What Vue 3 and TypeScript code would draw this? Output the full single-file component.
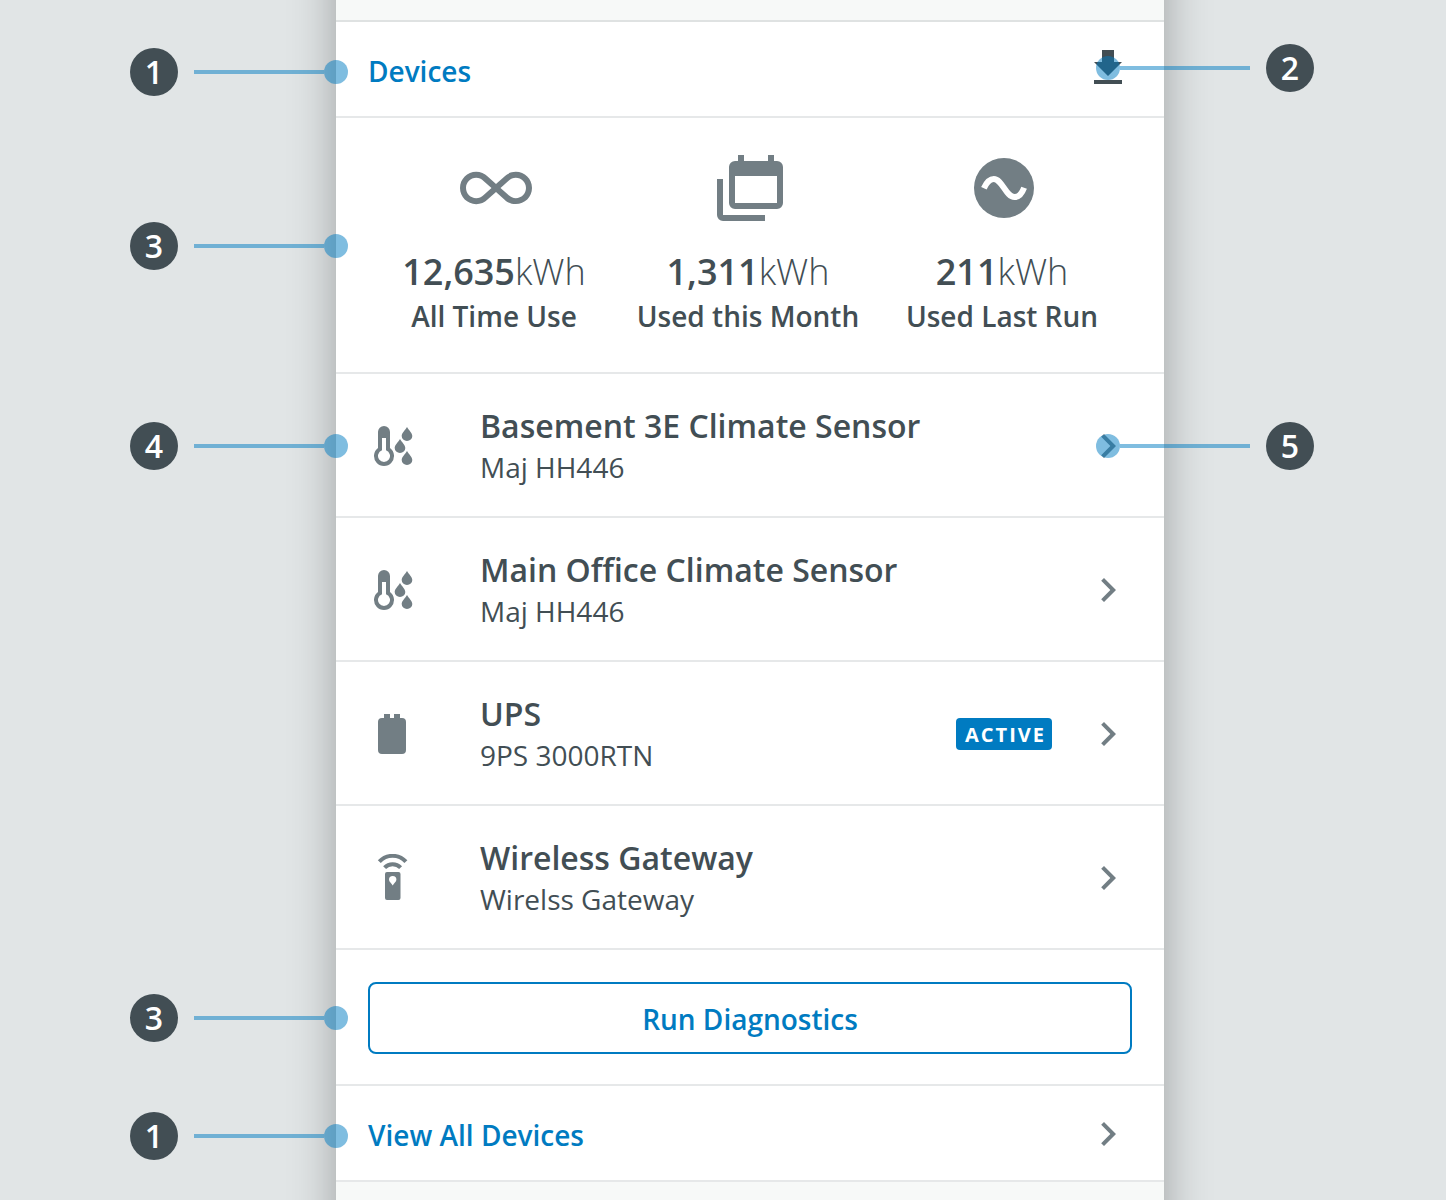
<script setup lang="ts">
interface Stat {
  value: string
  label: string
  icon: 'infinity' | 'calendar' | 'wave'
}

interface Device {
  name: string
  model: string
  icon: 'climate' | 'battery' | 'gateway'
  status?: string
  leftNote?: number
  rightNote?: number
}

const stats: Stat[] = [
  { value: '12,635', label: 'All Time Use', icon: 'infinity' },
  { value: '1,311', label: 'Used this Month', icon: 'calendar' },
  { value: '211', label: 'Used Last Run', icon: 'wave' },
]

const devices: Device[] = [
  { name: 'Basement 3E Climate Sensor', model: 'Maj HH446', icon: 'climate', leftNote: 4, rightNote: 5 },
  { name: 'Main Office Climate Sensor', model: 'Maj HH446', icon: 'climate' },
  { name: 'UPS', model: '9PS 3000RTN', icon: 'battery', status: 'ACTIVE' },
  { name: 'Wireless Gateway', model: 'Wirelss Gateway', icon: 'gateway' },
]
</script>

<template>
  <div class="page">
    <main class="card">
      <div class="strip strip-top"></div>

      <header class="section bar">
        <div class="bar-title">
          <h1 class="link-text">Devices</h1>
          <div class="note note-left note-inset">
            <span class="note-number">1</span><span class="note-line"></span><span class="note-dot"></span>
          </div>
        </div>
        <div class="bar-action">
          <button class="icon-button" type="button" aria-label="Download">
            <svg class="icon" viewBox="0 0 24 24"><path d="M19 9h-4V3H9v6H5l7 7 7-7zM5 18v2h14v-2H5z" /></svg>
          </button>
          <div class="note note-right note-inset">
            <span class="note-dot"></span><span class="note-line"></span><span class="note-number">2</span>
          </div>
        </div>
      </header>

      <section class="section stats">
        <div v-for="stat in stats" :key="stat.label" class="stat">
          <svg v-if="stat.icon === 'infinity'" class="stat-icon" viewBox="0 0 24 24">
            <path d="M18.6 6.62C21.58 6.62 24 9 24 12c0 2.96-2.42 5.37-5.4 5.37-1.45 0-2.8-.56-3.82-1.57L12 13.34l-2.83 2.51c-.97.97-2.33 1.53-3.77 1.53C2.42 17.38 0 14.96 0 12s2.42-5.38 5.4-5.38c1.44 0 2.8.56 3.82 1.58L12 10.66l2.83-2.51c.97-.97 2.33-1.53 3.77-1.53M7.8 14.39L10.5 12 7.84 9.65c-.68-.68-1.53-1.03-2.44-1.03C3.53 8.62 2 10.13 2 12s1.53 3.38 3.4 3.38c.91 0 1.76-.35 2.4-.99M16.2 9.61L13.5 12l2.66 2.35c.68.68 1.54 1.03 2.44 1.03 1.87 0 3.4-1.51 3.4-3.38s-1.53-3.38-3.4-3.38c-.91 0-1.76.35-2.4.99z" />
          </svg>
          <svg v-else-if="stat.icon === 'calendar'" class="stat-icon" viewBox="0 0 24 24">
            <path d="M21 17V8H7v9h14m0-14a2 2 0 0 1 2 2v12a2 2 0 0 1-2 2H7a2 2 0 0 1-2-2V5a2 2 0 0 1 2-2h1V1h2v2h8V1h2v2h1M3 21h14v2H3a2 2 0 0 1-2-2V9h2v12z" />
          </svg>
          <svg v-else class="stat-icon" viewBox="0 0 24 24">
            <circle cx="12" cy="12" r="10" />
            <path class="wave" d="M5.3 12.1C6.1 10.3 7 9 8.6 9c2.8 0 4 6 6.9 6 1.5 0 2.5-1.2 3.2-3.1" />
          </svg>
          <p class="stat-value">{{ stat.value }}<span class="unit">kWh</span></p>
          <p class="stat-label">{{ stat.label }}</p>
        </div>
        <div class="note note-left">
          <span class="note-number">3</span><span class="note-line"></span><span class="note-dot"></span>
        </div>
      </section>

      <ul class="devices">
        <li v-for="device in devices" :key="device.name" class="section">
          <a class="device" href="#">
            <svg v-if="device.icon === 'climate'" class="icon muted" viewBox="0 0 48 48">
              <path fill-rule="evenodd" d="M16 4a6 6 0 0 0-6 6v16a10 10 0 1 0 12 0V10a6 6 0 0 0-6-6zM14 16h4v12.35a6 6 0 1 1-4 0z" />
              <path d="M39 5c2 3.5 5.3 6 5.3 9a5.3 5 0 0 1-10.6 0c0-3 3.3-5.5 5.3-9zM32 17c2 3.5 5.3 6 5.3 9a5.3 5 0 0 1-10.6 0c0-3 3.3-5.5 5.3-9zM39 29c2 3.5 5.3 6 5.3 9a5.3 5 0 0 1-10.6 0c0-3 3.3-5.5 5.3-9z" />
            </svg>
            <svg v-else-if="device.icon === 'battery'" class="icon muted" viewBox="0 0 48 48">
              <path d="M16 4h6v4h4V4h6v4h2a4 4 0 0 1 4 4v28a4 4 0 0 1-4 4H14a4 4 0 0 1-4-4V12a4 4 0 0 1 4-4h2z" />
            </svg>
            <svg v-else class="icon muted" viewBox="0 0 48 48">
              <path fill-rule="evenodd" d="M19 18h11.5a2 2 0 0 1 2 2v24a2 2 0 0 1-2 2H19a2 2 0 0 1-2-2V20a2 2 0 0 1 2-2zM24.7 22a3.7 3.7 0 0 0-3.7 3.7c0 2.3 2.6 3.3 3.7 5.8 1.1-2.5 3.7-3.5 3.7-5.8a3.7 3.7 0 0 0-3.7-3.7z" />
              <path class="signal" d="M11.3 7.7a18 18 0 0 1 26.6 0M16.6 13.6a11 11 0 0 1 16 0" />
            </svg>
            <span class="device-text">
              <span class="device-name">{{ device.name }}</span>
              <span class="device-model">{{ device.model }}</span>
            </span>
            <span v-if="device.status" class="status">{{ device.status }}</span>
            <svg class="icon muted" viewBox="0 0 24 24"><path d="M10 6L8.59 7.41 13.17 12l-4.58 4.59L10 18l6-6z" /></svg>
          </a>
          <div v-if="device.leftNote" class="note note-left">
            <span class="note-number">{{ device.leftNote }}</span><span class="note-line"></span><span class="note-dot"></span>
          </div>
          <div v-if="device.rightNote" class="note note-right">
            <span class="note-dot"></span><span class="note-line"></span><span class="note-number">{{ device.rightNote }}</span>
          </div>
        </li>
      </ul>

      <section class="section action">
        <button class="run-button" type="button">Run Diagnostics</button>
        <div class="note note-left">
          <span class="note-number">3</span><span class="note-line"></span><span class="note-dot"></span>
        </div>
      </section>

      <footer class="section bar">
        <div class="bar-title">
          <a class="link-text" href="#">View All Devices</a>
          <div class="note note-left note-inset">
            <span class="note-number">1</span><span class="note-line"></span><span class="note-dot"></span>
          </div>
        </div>
        <svg class="icon muted" viewBox="0 0 24 24"><path d="M10 6L8.59 7.41 13.17 12l-4.58 4.59L10 18l6-6z" /></svg>
      </footer>

      <div class="strip strip-bottom"></div>
    </main>
  </div>
</template>

<style>
body {
  margin: 0;
  background: #e1e5e6;
}
</style>

<style scoped>
.page {
  --ink: #424e54;
  --muted: #727e84;
  --blue: #007bc1;
  --line: #e6e8e9;
  display: flex;
  box-sizing: border-box;
  min-height: 100vh;
  padding: 0 282px 0 336px;
  overflow: hidden;
  background: #e1e5e6;
  color: var(--ink);
  font-family: "Open Sans", "Noto Sans", sans-serif;
  font-size: 28px;
  line-height: 40px;
}

.card {
  position: relative;
  display: flex;
  flex: 1;
  flex-direction: column;
  min-width: 0;
}

/* The shadow runs past both ends of the page so that it never fades out. */
.card::before {
  position: absolute;
  inset: -80px 0;
  background: #fff;
  box-shadow: 0 0 44px rgba(0, 0, 0, 0.3);
  content: "";
}

.strip {
  position: relative;
  background: #f7f9f8;
}

.strip-top {
  height: 20px;
  border-bottom: 2px solid #dfe2e2;
}

.strip-bottom {
  flex: 1;
  min-height: 18px;
}

.section {
  position: relative;
  background: #fff;
  box-shadow: inset 0 -2px var(--line);
}

.bar {
  display: flex;
  align-items: center;
  justify-content: space-between;
  height: 96px;
  padding: 0 32px;
}

.bar-title {
  position: relative;
  margin-top: 4px;
}

.bar-action {
  position: relative;
  margin-bottom: 4px;
}

.link-text {
  display: block;
  margin: 0;
  padding-bottom: 2px;
  color: var(--blue);
  font-size: 28px;
  font-weight: 600;
  line-height: 38px;
  text-decoration: none;
}

.icon-button {
  display: block;
  padding: 0;
  border: 0;
  background: none;
  color: var(--ink);
  cursor: pointer;
}

.icon {
  display: block;
  flex: none;
  width: 48px;
  height: 48px;
  fill: currentColor;
}

.muted {
  color: var(--muted);
}

.signal {
  fill: none;
  stroke: currentColor;
  stroke-width: 4;
}

.stats {
  display: grid;
  grid-template-columns: repeat(3, 1fr);
  padding: 34px 33px 38px;
}

.stat {
  display: flex;
  flex-direction: column;
  align-items: center;
}

.stat-icon {
  width: 72px;
  height: 72px;
  margin-bottom: 24px;
  fill: var(--muted);
}

.wave {
  fill: none;
  stroke: #fff;
  stroke-width: 2;
}

.stat-value,
.stat-label {
  margin: 0;
  padding-right: 4px;
  font-weight: 600;
  white-space: nowrap;
}

.stat-value {
  font-size: 36px;
  line-height: 48px;
}

.unit {
  font-weight: 300;
}

.devices {
  margin: 0;
  padding: 0;
  list-style: none;
}

.device {
  display: flex;
  align-items: center;
  padding: 31px 32px;
  color: inherit;
  text-decoration: none;
}

.device-text {
  display: flex;
  flex: 1;
  flex-direction: column;
  min-width: 0;
  margin-left: 64px;
}

.device-name {
  font-size: 32px;
  font-weight: 600;
  line-height: 42px;
}

.status {
  box-sizing: border-box;
  height: 32px;
  margin-right: 32px;
  padding-left: 9px;
  padding-right: 6px;
  border-radius: 4px;
  background: var(--blue);
  color: #fff;
  font-size: 20px;
  font-weight: 700;
  letter-spacing: 2px;
  line-height: 34px;
}

.action {
  padding: 32px;
}

.run-button {
  display: block;
  width: 100%;
  height: 72px;
  padding: 2px 0 0;
  border: 2px solid var(--blue);
  border-radius: 8px;
  background: #fff;
  color: var(--blue);
  font-family: inherit;
  font-size: 28px;
  font-weight: 600;
  line-height: 40px;
  cursor: pointer;
}

.note {
  position: absolute;
  top: 50%;
  display: flex;
  align-items: center;
  height: 48px;
  margin-top: -24px;
  pointer-events: none;
}

.note-left {
  right: calc(100% - 12px);
}

.note-left.note-inset {
  right: calc(100% + 20px);
}

.note-right {
  left: calc(100% - 68px);
}

.note-right.note-inset {
  left: calc(100% - 36px);
}

.note-number {
  width: 48px;
  height: 48px;
  border-radius: 50%;
  background: var(--ink);
  color: #fff;
  font-size: 32px;
  font-weight: 600;
  line-height: 48px;
  text-align: center;
}

.note-line {
  width: 130px;
  height: 4px;
  background: rgba(0, 123, 193, 0.5);
}

.note-left .note-line {
  margin-left: 16px;
}

.note-right .note-line {
  margin-right: 16px;
}

.note-dot {
  width: 24px;
  height: 24px;
  border-radius: 50%;
  background: rgba(0, 123, 193, 0.5);
}
</style>
